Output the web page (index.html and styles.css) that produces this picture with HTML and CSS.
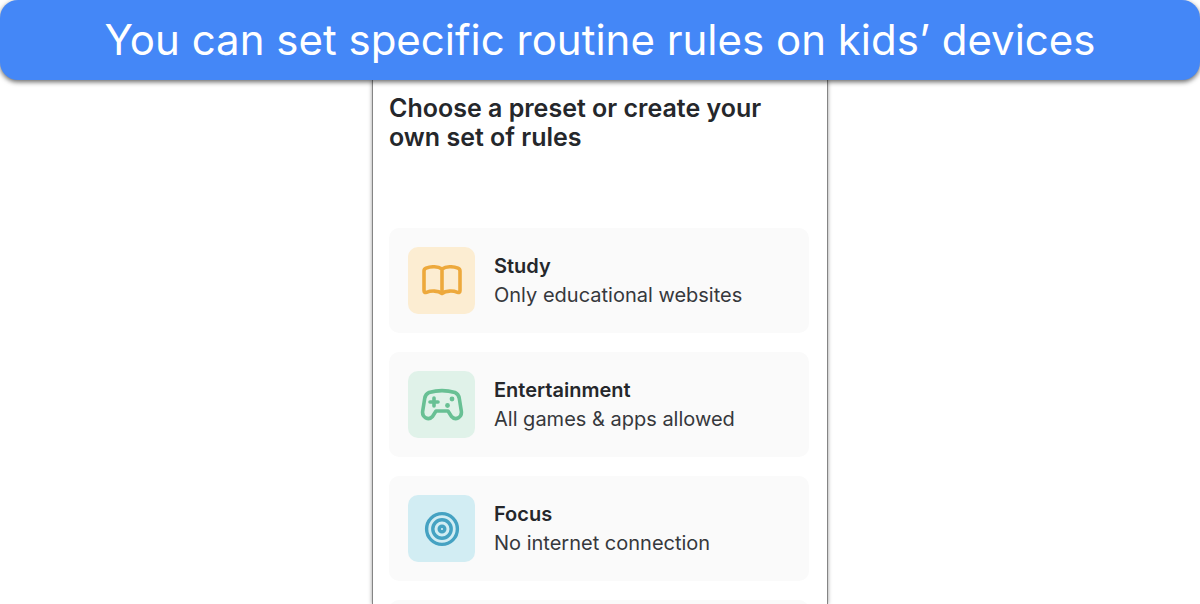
FILE: index.html
```html
<!DOCTYPE html>
<html lang="en">
<head>
  <meta charset="UTF-8">
  <meta name="viewport" content="width=device-width, initial-scale=1.0">
  <title>Routine rules</title>
  <link rel="stylesheet" href="styles.css">
</head>
<body>

  <header class="banner">You can set specific routine rules on kids’ devices</header>

  <main class="panel">
    <h1>Choose a preset or create your own set of rules</h1>

    <div class="preset-list">
      <button class="preset" type="button">
        <span class="preset-icon study">
          <svg width="40" height="32" viewBox="0 0 40 32" fill="none" stroke="currentColor" stroke-width="3.6" stroke-linejoin="round" stroke-linecap="round">
            <path d="M20 4C16 1.200 9 1.200 4 3.200Q2 4 2 6V25.500Q2 28 4.500 27.300C9 25.500 16 25.500 20 28.500C24 25.500 31 25.500 35.500 27.300Q38 28 38 25.500V6Q38 4 36 3.200C31 1.200 24 1.200 20 4V28"/>
          </svg>
        </span>
        <span class="preset-text">
          <strong>Study</strong>
          <span>Only educational websites</span>
        </span>
      </button>

      <button class="preset" type="button">
        <span class="preset-icon entertainment">
          <svg width="44" height="34" viewBox="0 0 44 34" fill="none" stroke="currentColor" stroke-width="3.600" stroke-linejoin="round" stroke-linecap="round">
            <path d="M9 4.500C17 2.200 27 2.200 35 4.500C37.500 5.500 38.800 7.500 39.300 10.500L41.300 23C42.300 29.500 35.500 33 31.500 28.500L28 23H16L12.500 28.500C8.500 33 1.700 29.500 2.700 23L4.700 10.500C5.200 7.500 6.500 5.500 9 4.500Z"/>
            <path d="M14 10V18M10 14H18"/>
            <circle cx="32" cy="11" r="2.400" fill="currentColor" stroke="none"/>
            <circle cx="27.500" cy="17.500" r="2.400" fill="currentColor" stroke="none"/>
          </svg>
        </span>
        <span class="preset-text">
          <strong>Entertainment</strong>
          <span>All games &amp; apps allowed</span>
        </span>
      </button>

      <button class="preset" type="button">
        <span class="preset-icon focus">
          <svg width="36" height="36" viewBox="0 0 36 36" fill="none" stroke="currentColor" stroke-width="3.400">
            <circle cx="18" cy="18" r="15.400"/>
            <circle cx="18" cy="18" r="9.200"/>
            <circle cx="18" cy="18" r="2.800"/>
          </svg>
        </span>
        <span class="preset-text">
          <strong>Focus</strong>
          <span>No internet connection</span>
        </span>
      </button>

      <div class="preset"></div>
    </div>
  </main>

</body>
</html>
```

FILE: styles.css
```css
* {
  box-sizing: border-box;
}

body {
  margin: 0;
  height: 100vh;
  overflow: hidden;
  display: flex;
  flex-direction: column;
  align-items: center;
  background: #fff;
  color: #25272b;
  font-family: Inter, "Liberation Sans", sans-serif;
}

.banner {
  position: relative;
  width: 100%;
  flex: none;
  padding: 15px 20px;
  background: #4487f7;
  border-radius: 18px;
  box-shadow: 0 2px 5px rgba(0, 0, 0, 0.6);
  color: #fff;
  font-size: 42px;
  line-height: 50px;
  text-align: center;
}

.panel {
  width: 100%;
  max-width: 456px;
  flex: 1;
  min-height: 0;
  overflow: hidden;
  padding: 14px 18px 0 16px;
  border: 1px solid #858585;
  border-width: 0 1px;
  box-shadow: 0 0 4px rgba(0, 0, 0, 0.4);
}

h1 {
  margin: 0 0 76px;
  font-size: 25px;
  font-weight: 600;
  line-height: 29px;
}

.preset-list {
  display: flex;
  flex-direction: column;
  gap: 19px;
}

.preset {
  display: flex;
  align-items: center;
  gap: 19px;
  width: 100%;
  min-height: 105px;
  padding: 19px;
  border: none;
  border-radius: 10px;
  background: #fafafa;
  color: inherit;
  font-family: inherit;
  font-size: 20px;
  line-height: 29px;
  text-align: left;
  cursor: pointer;
}

.preset-icon {
  display: flex;
  align-items: center;
  justify-content: center;
  flex: none;
  width: 67px;
  height: 67px;
  border-radius: 10px;
}

.study {
  background: #fcedd2;
  color: #eda93c;
}

.entertainment {
  background: #e0f2e9;
  color: #68c094;
}

.focus {
  background: #d2edf3;
  color: #45a2c2;
}

.preset-text {
  display: flex;
  flex-direction: column;
  color: #36383c;
}

.preset-text strong {
  color: #25272b;
  font-weight: 600;
}
```
